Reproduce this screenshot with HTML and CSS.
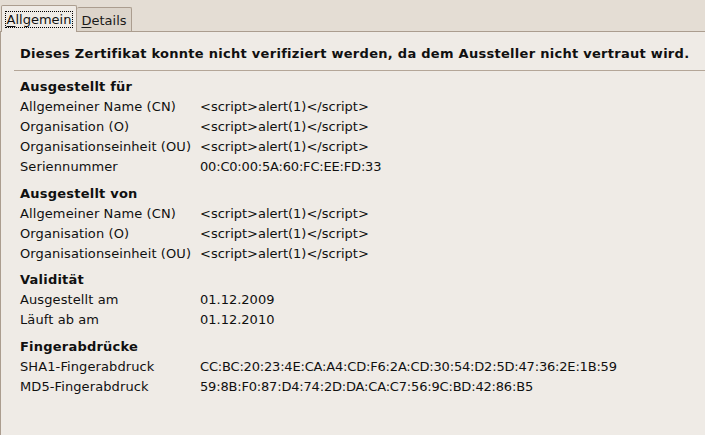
FILE: index.html
```html
<!DOCTYPE html>
<html lang="de">
<head>
    <meta charset="UTF-8">
    <title>Zertifikat-Ansicht</title>
    <link rel="stylesheet" href="styles.css">
</head>
<body>
    <div class="notebook">
        <div class="tabs">
            <div class="tab active"><span class="focus"><u>A</u>llgemein</span></div>
            <div class="tab"><u>D</u>etails</div>
        </div>
        <div class="page">
            <div class="warning">Dieses Zertifikat konnte nicht verifiziert werden, da dem Aussteller nicht vertraut wird.</div>
            <div class="fields">
                <div class="section">
                    <div class="heading">Ausgestellt für</div>
                    <div class="row"><span class="label">Allgemeiner Name (CN)</span><span class="value">&lt;script&gt;alert(1)&lt;/script&gt;</span></div>
                    <div class="row"><span class="label">Organisation (O)</span><span class="value">&lt;script&gt;alert(1)&lt;/script&gt;</span></div>
                    <div class="row"><span class="label">Organisationseinheit (OU)</span><span class="value">&lt;script&gt;alert(1)&lt;/script&gt;</span></div>
                    <div class="row"><span class="label">Seriennummer</span><span class="value hex">00:C0:00:5A:60:FC:EE:FD:33</span></div>
                </div>
                <div class="section">
                    <div class="heading">Ausgestellt von</div>
                    <div class="row"><span class="label">Allgemeiner Name (CN)</span><span class="value">&lt;script&gt;alert(1)&lt;/script&gt;</span></div>
                    <div class="row"><span class="label">Organisation (O)</span><span class="value">&lt;script&gt;alert(1)&lt;/script&gt;</span></div>
                    <div class="row"><span class="label">Organisationseinheit (OU)</span><span class="value">&lt;script&gt;alert(1)&lt;/script&gt;</span></div>
                </div>
                <div class="section">
                    <div class="heading">Validität</div>
                    <div class="row"><span class="label">Ausgestellt am</span><span class="value">01.12.2009</span></div>
                    <div class="row"><span class="label">Läuft ab am</span><span class="value">01.12.2010</span></div>
                </div>
                <div class="section">
                    <div class="heading">Fingerabdrücke</div>
                    <div class="row"><span class="label">SHA1-Fingerabdruck</span><span class="value hex">CC:BC:20:23:4E:CA:A4:CD:F6:2A:CD:30:54:D2:5D:47:36:2E:1B:59</span></div>
                    <div class="row"><span class="label">MD5-Fingerabdruck</span><span class="value hex">59:8B:F0:87:D4:74:2D:DA:CA:C7:56:9C:BD:42:86:B5</span></div>
                </div>
            </div>
        </div>
    </div>
</body>
</html>
```

FILE: styles.css
```css
body {
    margin: 0;
    background-color: #e4ddd4; /* fondo de la ventana */
    font-family: "DejaVu Sans", sans-serif;
    font-size: 13px;
    color: #101010;
    overflow: hidden;
}
.notebook {
    display: flex;
    flex-direction: column;
    height: 435px;
}
.tabs {
    display: flex;
    align-items: flex-end;
    height: 31px;
    padding-left: 1px;
}
.tab {
    border: 1px solid #ab9d8f;
    border-bottom: none;
    border-radius: 2px 2px 0 0;
    box-sizing: border-box;
    display: flex;
    align-items: center;
    justify-content: center;
}
.tab u {
    text-decoration-thickness: 1px;
    text-underline-offset: 2px;
}
.tab.active {
    width: 76px;
    height: 27px;
    margin-bottom: -1px;
    background-color: #efebe6;
    position: relative;
    z-index: 1;
}
.tab:not(.active) {
    width: 55px;
    height: 24px;
    background-color: #dcd4ca;
    border-left: none;
    color: #1a1a1a;
    padding-top: 1px;
}
.focus {
    border: 1px dotted #000;
    padding: 0 1px;
    line-height: 15px;
}
.page {
    flex: 1;
    background-color: #efebe6;
    border-top: 1px solid #ab9d8f;
    border-left: 1px solid #ab9d8f;
    padding-left: 13px;
}
.warning {
    font-weight: bold;
    letter-spacing: 0.28px;
    padding: 14px 0 8px 6px;
    line-height: 16px;
    border-bottom: 1px solid #b4a698;
    white-space: nowrap;
}
.fields {
    padding: 6px 0 0 6px;
}
.section + .section {
    margin-top: 6.5px;
}
.heading {
    font-weight: bold;
    letter-spacing: 0.22px;
    line-height: 20px;
}
.row {
    display: flex;
    line-height: 20px;
}
.label {
    width: 180px;
    flex-shrink: 0;
    letter-spacing: 0.1px;
}
.value {
    white-space: nowrap;
}
.hex {
    letter-spacing: -0.18px;
}
```
